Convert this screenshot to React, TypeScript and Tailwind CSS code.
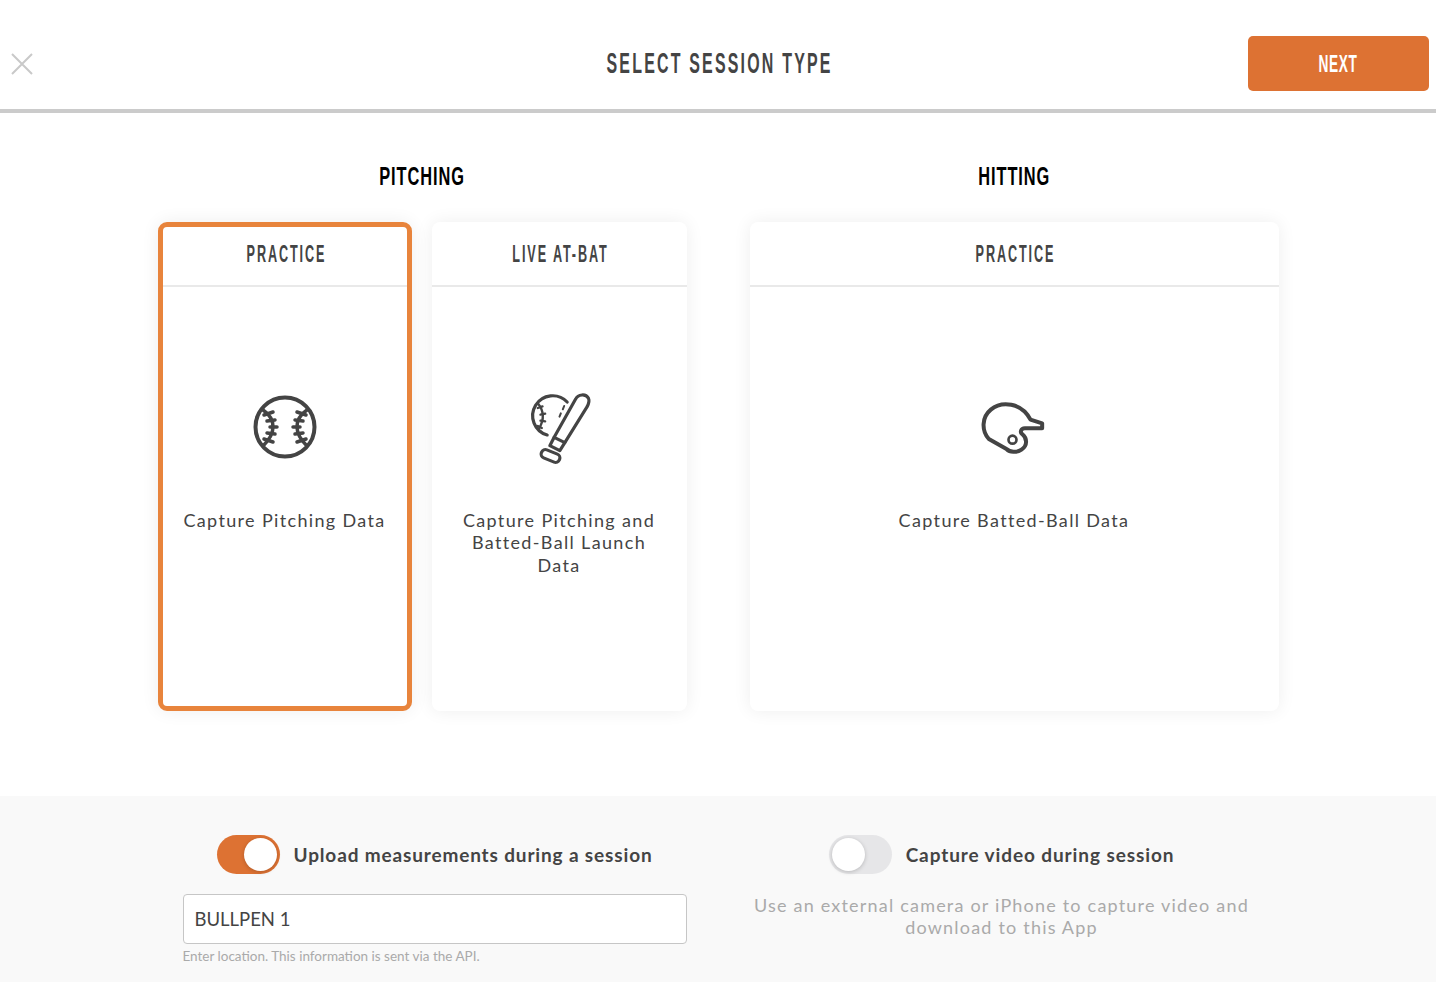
import React from 'react'

const Condensed = ({ children, className = '' }: { children: React.ReactNode; className?: string }) => (
  <span className={`inline-block whitespace-nowrap font-['Liberation_Sans_Narrow','Liberation_Sans',sans-serif] font-bold ${className}`}>
    {children}
  </span>
)

const BallIcon = () => (
  <svg width="70" height="74" viewBox="0 0 70 74" fill="none" stroke="#444" strokeWidth="4" strokeLinecap="round">
    <circle cx="35" cy="35" r="29.5" />
    <path d="M13 18c6 4 10 10 10 17s-4 13-10 19M57 18c-6 4-10 10-10 17s4 13 10 19" strokeWidth="3.5" />
    <path d="M14 23l9-3M17 29l8-1M20 35h7M17 41l8 1M14 47l9 3M56 23l-9-3M53 29l-8-1M50 35h-7M53 41l-8 1M56 47l-9 3" strokeWidth="3.5" />
  </svg>
)

const BatIcon = () => (
  <svg width="66.67" height="76" viewBox="48.5 33 200 228" fill="none" stroke="#444" strokeWidth="9.5" strokeLinecap="round" strokeLinejoin="round">
    <path d="M172 66A60 60 0 1 0 112 165" />
    <path d="M84 70Q112 105 88 145" strokeWidth="7" />
    <path d="M84 84l14-5M92 104l14-3M92 122l14 2M84 138l12 6" strokeWidth="7" />
    <path d="M163 78l-4 10M153 100l-4 10" strokeWidth="6" />
    <path d="M197 58C205 42 228 40 236 55 240 63 236 72 232 80L165 188 150 212 120 197 133 172z" />
    <path d="M133 172l32 16" />
    <rect x="93" y="215" width="58" height="26" rx="12" transform="rotate(22 122 228)" />
  </svg>
)

const HelmetIcon = () => (
  <svg width="66.67" height="56" viewBox="48.5 36 200 168" fill="none" stroke="#444" strokeWidth="12" strokeLinecap="round" strokeLinejoin="round">
    <path d="M72 150C50 125 50 85 78 62 110 35 170 40 197 92L232 103V118H180C168 118 165 130 172 135 188 148 188 170 170 182 155 192 135 190 125 180z" />
    <circle cx="143" cy="152" r="12" strokeWidth="8" />
  </svg>
)

const Toggle = ({ on }: { on: boolean }) => (
  <div className={`w-[63px] h-[39px] rounded-full flex items-center px-[3px] shrink-0 ${on ? 'justify-end bg-[#dd7233]' : 'justify-start bg-[#e6e6e8]'}`}>
    <div className="w-[33px] h-[33px] rounded-full bg-white shadow-[0_1px_4px_rgba(0,0,0,0.2)]" />
  </div>
)

const SessionCard = ({ title, text, icon, selected, className }: { title: string; text: string; icon: React.ReactNode; selected?: boolean; className: string }) => (
  <div className={`h-[489px] bg-white flex flex-col overflow-hidden shadow-[0_0_18px_rgba(0,0,0,0.07)] ${selected ? 'border-[5px] border-[#e8843c] rounded-[9px]' : 'rounded-lg'} ${className}`}>
    <div className={`shrink-0 border-b-2 border-[#e9e9e9] flex items-center justify-center pl-[3px] pt-[2px] ${selected ? 'h-[60px] pb-[5px]' : 'h-[65px]'}`}>
      <Condensed className="text-[23px] text-[#444] tracking-[3.4px] scale-x-[0.55]">{title}</Condensed>
    </div>
    <div className="flex flex-col items-center pt-[102px]">
      <div className="h-[80px] flex items-center justify-center">{icon}</div>
      <p className={`mt-[40px] text-center font-['Lato',sans-serif] text-[18px] leading-[22.4px] tracking-[1.35px] text-[#444] ${selected ? 'px-4' : 'px-6'}`}>{text}</p>
    </div>
  </div>
)

export default function App() {
  return (
    <div className="w-[1436px] h-[982px] bg-white flex flex-col overflow-hidden font-['Lato',sans-serif]">
      <header className="h-[113px] shrink-0 grid grid-cols-[1fr_auto_1fr] items-center pt-[18px] pl-[11px] pr-[7px] border-b-[4px] border-[#cbcbcb]">
        <svg width="22" height="22" viewBox="0 0 22 22" stroke="#c9c9c9" strokeWidth="2" fill="none">
          <path d="M1 1l20 20M21 1L1 21" />
        </svg>
        <Condensed className="text-[29px] text-[#444] tracking-[4px] scale-x-[0.55]">SELECT SESSION TYPE</Condensed>
        <button className="justify-self-end w-[181px] h-[55px] rounded-[5px] bg-[#dd7233] flex items-center justify-center">
          <Condensed className="text-[24px] text-white tracking-[1px] scale-x-[0.57]">NEXT</Condensed>
        </button>
      </header>

      <main className="h-[683px] shrink-0 flex justify-center gap-[63px]">
        <section className="w-[529px]">
          <div className="h-[109px] pt-[46px] flex justify-center">
            <Condensed className="text-[26px] leading-[34px] text-black tracking-[1.5px] scale-x-[0.63]">PITCHING</Condensed>
          </div>
          <div className="flex gap-[20px]">
            <SessionCard className="w-[254px]" selected title="PRACTICE" text="Capture Pitching Data" icon={<BallIcon />} />
            <SessionCard className="w-[255px]" title="LIVE AT-BAT" text="Capture Pitching and Batted-Ball Launch Data" icon={<BatIcon />} />
          </div>
        </section>
        <section className="w-[529px]">
          <div className="h-[109px] pt-[46px] flex justify-center">
            <Condensed className="text-[26px] leading-[34px] text-black tracking-[1.5px] scale-x-[0.63]">HITTING</Condensed>
          </div>
          <SessionCard className="w-[529px]" title="PRACTICE" text="Capture Batted-Ball Data" icon={<HelmetIcon />} />
        </section>
      </main>

      <footer className="flex-1 bg-[#f9f9f9] pt-[39px] flex justify-center gap-[63px]">
        <div className="w-[504px]">
          <div className="flex items-center justify-center gap-[14px]">
            <Toggle on />
            <span className="pt-[2px] text-[19px] font-bold tracking-[0.85px] text-[#444]">Upload measurements during a session</span>
          </div>
          <div className="mt-[20px] h-[50px] rounded-[4px] border border-[#c6c6c6] bg-white flex items-center pl-[11px] pt-[2px] text-[18.5px] text-[#444]">BULLPEN 1</div>
          <p className="mt-[3px] text-[13.5px] leading-[18px] text-[#aaa]">Enter location. This information is sent via the API.</p>
        </div>
        <div className="w-[504px]">
          <div className="flex items-center justify-center gap-[14px]">
            <Toggle on={false} />
            <span className="pt-[2px] text-[19px] font-bold tracking-[0.9px] text-[#444]">Capture video during session</span>
          </div>
          <p className="mt-[20px] text-center text-[18px] leading-[22.4px] tracking-[1.2px] text-[#aaa]">Use an external camera or iPhone to capture video and download to this App</p>
        </div>
      </footer>
    </div>
  )
}
